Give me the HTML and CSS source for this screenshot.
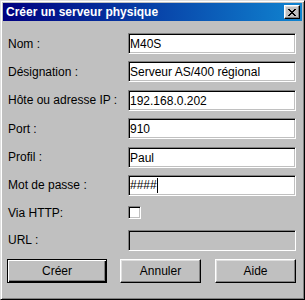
FILE: index.html
```html
<!DOCTYPE html>
<html lang="fr">
<head>
  <meta charset="UTF-8">
  <title>Créer un serveur physique</title>
  <link rel="stylesheet" href="styles.css">
</head>
<body>
  <!-- Dialog window -->
  <div class="window">
    <div class="titlebar">
      <span class="title">Créer un serveur physique</span>
      <div class="close-btn">
        <svg width="8" height="7" viewBox="0 0 8 7" shape-rendering="crispEdges">
          <path d="M0 0h2v1h-2zM6 0h2v1h-2zM1 1h2v1h-2zM5 1h2v1h-2zM2 2h4v1h-4zM3 3h2v1h-2zM2 4h4v1h-4zM1 5h2v1h-2zM5 5h2v1h-2zM0 6h2v1h-2zM6 6h2v1h-2z" fill="#000"/>
        </svg>
      </div>
    </div>
    <!-- Form rows -->
    <div class="form">
      <div class="row">
        <label>Nom :</label>
        <div class="field">M40S</div>
      </div>
      <div class="row">
        <label>Désignation :</label>
        <div class="field">Serveur AS/400 régional</div>
      </div>
      <div class="row">
        <label>Hôte ou adresse IP :</label>
        <div class="field">192.168.0.202</div>
      </div>
      <div class="row">
        <label>Port :</label>
        <div class="field">910</div>
      </div>
      <div class="row">
        <label>Profil :</label>
        <div class="field">Paul</div>
      </div>
      <div class="row">
        <label>Mot de passe :</label>
        <div class="field"><span class="caret">####</span></div>
      </div>
      <div class="row row-check">
        <label>Via HTTP:</label>
        <div class="checkbox"></div>
      </div>
      <div class="row">
        <label>URL :</label>
        <div class="field disabled"></div>
      </div>
    </div>
    <!-- Buttons -->
    <div class="buttons">
      <div class="btn btn-default">Créer</div>
      <div class="btn btn-cancel">Annuler</div>
      <div class="btn btn-help">Aide</div>
    </div>
  </div>
</body>
</html>
```

FILE: styles.css
```css
* {
  margin: 0;
  padding: 0;
  box-sizing: border-box;
}
body {
  font-family: 'Liberation Sans', Arial, sans-serif;
  font-size: 12px;
  color: #000;
  background: #c0c0c0;
}
/* Classic raised window frame */
.window {
  width: 305px;
  height: 300px;
  padding: 2px;
  background: #c0c0c0;
  border: 1px solid;
  border-color: #dfdfdf #000 #000 #dfdfdf;
  box-shadow: inset 1px 1px #fff, inset -1px -1px #808080;
}
.titlebar {
  height: 18px;
  display: flex;
  align-items: center;
  padding-left: 3px;
  padding-right: 2px;
  background: linear-gradient(to right, #000080, #1084d0);
  color: #fff;
}
.title {
  font-weight: bold;
  font-size: 12px;
  flex: 1;
  white-space: nowrap;
}
.close-btn {
  width: 16px;
  height: 14px;
  display: flex;
  align-items: center;
  justify-content: center;
  background: #c0c0c0;
  border: 1px solid;
  border-color: #fff #000 #000 #fff;
  box-shadow: inset -1px -1px #808080, inset 1px 1px #dfdfdf;
}
.close-btn svg {
  display: block;
}
/* Form */
.form {
  display: flex;
  flex-direction: column;
  gap: 7.4px;
  padding: 12px 6px 0 5px;
}
.row {
  display: flex;
  align-items: center;
  height: 21px;
}
.row-check {
  height: 19px;
}
.row label {
  width: 120px;
  white-space: nowrap;
}
.field {
  flex: 1;
  height: 21px;
  display: flex;
  align-items: center;
  padding-left: 1px;
  background: #fff;
  border: 1px solid;
  border-color: #808080 #fff #fff #808080;
  box-shadow: inset 1px 1px #000, inset -1px -1px #c0c0c0;
  padding-top: 1px;
  white-space: nowrap;
}
.field.disabled {
  background: #c0c0c0;
}
.caret {
  display: inline-block;
  height: 15px;
  line-height: 15px;
  border-right: 1px solid #000;
}
.checkbox {
  width: 13px;
  height: 13px;
  background: #fff;
  border: 1px solid;
  border-color: #808080 #fff #fff #808080;
  box-shadow: inset 1px 1px #000, inset -1px -1px #c0c0c0;
}
/* Buttons */
.buttons {
  display: flex;
  margin-top: 8px;
  padding-left: 4px;
}
.btn {
  height: 24px;
  display: flex;
  align-items: center;
  justify-content: center;
  background: #c0c0c0;
  border: 1px solid;
  border-color: #fff #000 #000 #fff;
  box-shadow: inset -1px -1px #808080, inset 1px 1px #dfdfdf;
}
.btn-default {
  width: 100px;
  border-color: #000;
  box-shadow: inset 1px 1px #fff, inset -1px -1px #000, inset -2px -2px #808080;
}
.btn-cancel {
  width: 81px;
  margin-left: 13px;
}
.btn-help {
  width: 81px;
  margin-left: 14px;
}
```
